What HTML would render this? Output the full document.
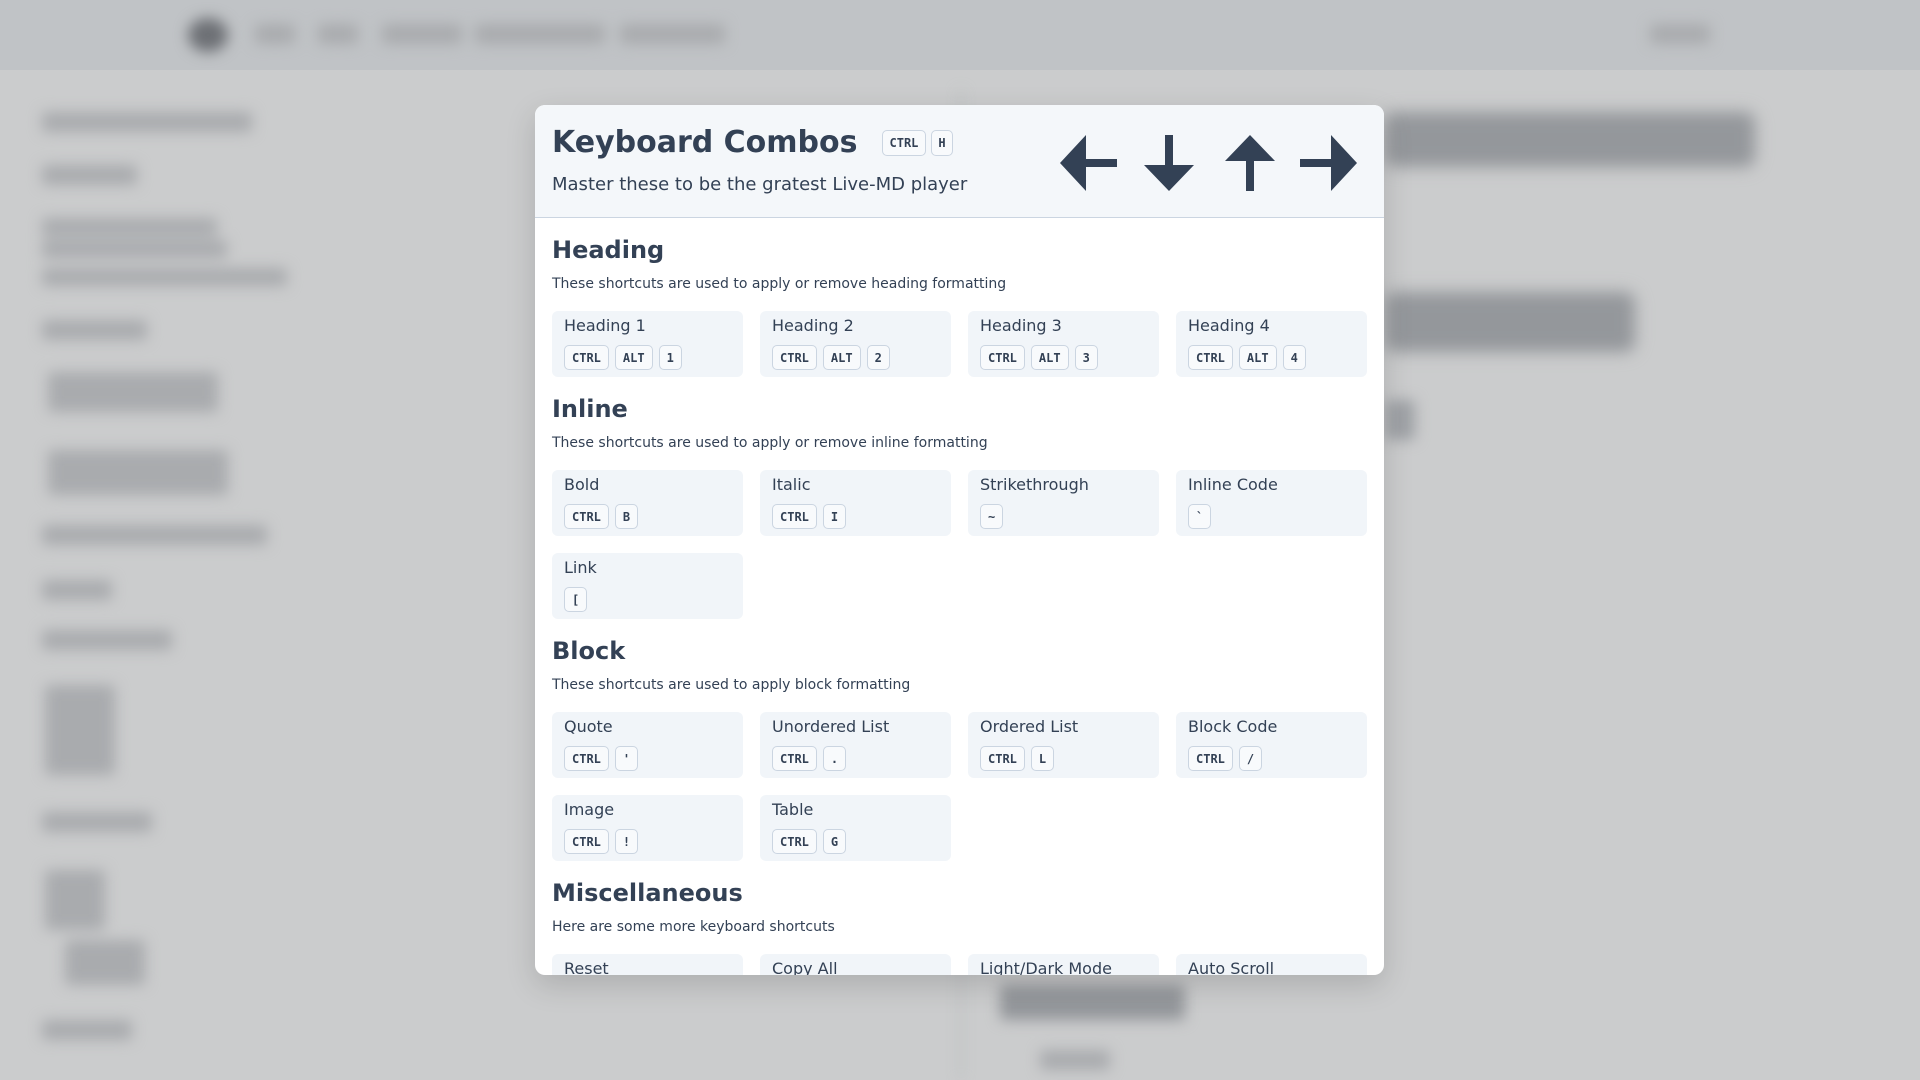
<!DOCTYPE html>
<html><head><meta charset="utf-8"><style>
*{box-sizing:border-box;margin:0;padding:0}
html,body{width:1920px;height:1080px;overflow:hidden}
body{background:#cbcccd;font-family:"DejaVu Sans","Liberation Sans",sans-serif;color:#334155;position:relative}
.bg{position:absolute;inset:0;filter:blur(7px)}
.bg div{position:absolute;background:#a9abae;border-radius:4px}
.hdr{position:absolute;left:0;top:0;width:1920px;height:70px;background:#c0c3c6}
.modal{position:absolute;left:535px;top:105px;width:849px;height:870px;background:#fff;border-radius:10px;overflow:hidden;box-shadow:0 10px 30px rgba(0,0,0,.15)}
.mh{height:113px;background:#f4f7fa;border-bottom:1px solid #cbd5e1;position:relative}
.title{position:absolute;left:17px;top:18px;font-size:30px;font-weight:bold;line-height:40px;display:flex;align-items:center}
.title .keys{margin-left:24px;display:flex;gap:5px}
.sub{position:absolute;left:17px;top:67px;font-size:18px;line-height:26px}
.arrows{position:absolute;left:525px;top:30px}
kbd{display:inline-flex;align-items:center;justify-content:center;height:25px;padding:0 7px;border:1px solid #cbd5e1;border-radius:5px;background:#f8fafc;font-family:"DejaVu Sans Mono","Liberation Mono",monospace;font-weight:bold;font-size:12px;color:#334155}
.body{padding:16px 16px 0 17px}
h2{font-size:24px;line-height:32px;font-weight:bold}
.desc{font-size:14px;line-height:20px;margin-top:8px}
.grid{display:grid;grid-template-columns:repeat(4,191px);gap:17px;margin-top:17px;margin-bottom:16px}
.card{background:#f1f5f9;border-radius:6px;padding:3px 12px 8px;height:66px}
.card .t{font-size:16px;line-height:24px}
.card .k{display:flex;gap:6px;margin-top:7px}
</style></head><body>
<div class="hdr"></div>
<div class="bg">
<div style="left:188px;top:18px;width:40px;height:34px;border-radius:50%;background:#6d7075"></div>
<div style="left:255px;top:24px;width:40px;height:20px"></div>
<div style="left:318px;top:24px;width:40px;height:20px"></div>
<div style="left:382px;top:24px;width:80px;height:20px"></div>
<div style="left:475px;top:24px;width:130px;height:20px"></div>
<div style="left:620px;top:24px;width:105px;height:20px"></div>
<div style="left:1650px;top:24px;width:60px;height:20px"></div>
<div style="left:42px;top:112px;width:210px;height:20px"></div>
<div style="left:42px;top:165px;width:95px;height:20px"></div>
<div style="left:42px;top:218px;width:175px;height:18px"></div>
<div style="left:42px;top:240px;width:185px;height:18px"></div>
<div style="left:42px;top:268px;width:245px;height:18px"></div>
<div style="left:42px;top:320px;width:105px;height:20px"></div>
<div style="left:48px;top:372px;width:170px;height:40px"></div>
<div style="left:48px;top:450px;width:180px;height:45px"></div>
<div style="left:42px;top:525px;width:225px;height:20px"></div>
<div style="left:42px;top:580px;width:70px;height:20px"></div>
<div style="left:42px;top:630px;width:130px;height:20px"></div>
<div style="left:45px;top:685px;width:70px;height:90px"></div>
<div style="left:42px;top:812px;width:110px;height:20px"></div>
<div style="left:45px;top:870px;width:60px;height:60px"></div>
<div style="left:65px;top:940px;width:80px;height:45px"></div>
<div style="left:42px;top:1020px;width:90px;height:20px"></div>
<div style="left:960px;top:90px;width:2px;height:990px;background:#b5b7ba"></div>
<div style="left:1385px;top:112px;width:370px;height:55px;background:#94979b;filter:blur(4px);border-radius:10px"></div>
<div style="left:1385px;top:292px;width:250px;height:60px;background:#94979b;filter:blur(4px);border-radius:10px"></div>
<div style="left:1385px;top:400px;width:30px;height:40px;background:#9ea1a5"></div>
<div style="left:1000px;top:985px;width:185px;height:35px;background:#94979b"></div>
<div style="left:1040px;top:1050px;width:70px;height:20px"></div>
</div>
<div class="modal">
<div class="mh">
<div class="title">Keyboard Combos<span class="keys"><kbd style="height:26px">CTRL</kbd><kbd style="height:26px;padding:0 6px">H</kbd></span></div>
<div class="sub">Master these to be the gratest Live-MD player</div>
<svg class="arrows" width="300" height="60" viewBox="0 0 300 60" fill="#334155">
<polygon points="0,28 26,0 26,24 57,24 57,32 26,32 26,56"/>
<g transform="translate(80,0)"><polygon points="25,0 33,0 33,30 54,30 29,56 4,30 25,30"/></g>
<g transform="translate(161,0)"><polygon points="29,0 54,26 33,26 33,56 25,56 25,26 4,26"/></g>
<g transform="translate(240,0)"><polygon points="57,28 31,0 31,24 0,24 0,32 31,32 31,56"/></g>
</svg>
</div>
<div class="body">
<h2>Heading</h2>
<div class="desc">These shortcuts are used to apply or remove heading formatting</div>
<div class="grid">
<div class="card"><div class="t">Heading 1</div><div class="k"><kbd>CTRL</kbd><kbd>ALT</kbd><kbd>1</kbd></div></div>
<div class="card"><div class="t">Heading 2</div><div class="k"><kbd>CTRL</kbd><kbd>ALT</kbd><kbd>2</kbd></div></div>
<div class="card"><div class="t">Heading 3</div><div class="k"><kbd>CTRL</kbd><kbd>ALT</kbd><kbd>3</kbd></div></div>
<div class="card"><div class="t">Heading 4</div><div class="k"><kbd>CTRL</kbd><kbd>ALT</kbd><kbd>4</kbd></div></div>
</div>
<h2>Inline</h2>
<div class="desc">These shortcuts are used to apply or remove inline formatting</div>
<div class="grid">
<div class="card"><div class="t">Bold</div><div class="k"><kbd>CTRL</kbd><kbd>B</kbd></div></div>
<div class="card"><div class="t">Italic</div><div class="k"><kbd>CTRL</kbd><kbd>I</kbd></div></div>
<div class="card"><div class="t">Strikethrough</div><div class="k"><kbd>~</kbd></div></div>
<div class="card"><div class="t">Inline Code</div><div class="k"><kbd>`</kbd></div></div>
<div class="card"><div class="t">Link</div><div class="k"><kbd>[</kbd></div></div>
</div>
<h2>Block</h2>
<div class="desc">These shortcuts are used to apply block formatting</div>
<div class="grid">
<div class="card"><div class="t">Quote</div><div class="k"><kbd>CTRL</kbd><kbd>'</kbd></div></div>
<div class="card"><div class="t">Unordered List</div><div class="k"><kbd>CTRL</kbd><kbd>.</kbd></div></div>
<div class="card"><div class="t">Ordered List</div><div class="k"><kbd>CTRL</kbd><kbd>L</kbd></div></div>
<div class="card"><div class="t">Block Code</div><div class="k"><kbd>CTRL</kbd><kbd>/</kbd></div></div>
<div class="card"><div class="t">Image</div><div class="k"><kbd>CTRL</kbd><kbd>!</kbd></div></div>
<div class="card"><div class="t">Table</div><div class="k"><kbd>CTRL</kbd><kbd>G</kbd></div></div>
</div>
<h2>Miscellaneous</h2>
<div class="desc">Here are some more keyboard shortcuts</div>
<div class="grid">
<div class="card"><div class="t">Reset</div></div>
<div class="card"><div class="t">Copy All</div></div>
<div class="card"><div class="t">Light/Dark Mode</div></div>
<div class="card"><div class="t">Auto Scroll</div></div>
</div>
</div>
</div>
</body></html>
